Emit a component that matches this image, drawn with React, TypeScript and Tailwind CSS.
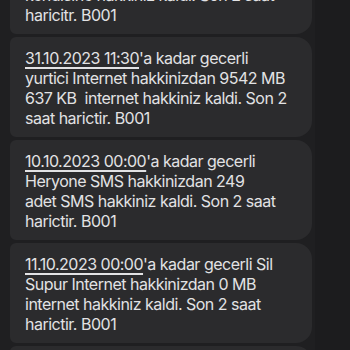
import * as React from "react";

type Msg = { date: string; lines: string[] };

const messages: Msg[] = [
  {
    date: "",
    lines: [
      "Sil Supur",
      "Internet hakkinizdan 0 MB",
      "kendisine hakkiniz kaldi. Son 2 saat",
      "haricitr. B001",
    ],
  },
  {
    date: "31.10.2023 11:30",
    lines: [
      "'a kadar gecerli",
      "yurtici Internet hakkinizdan 9542 MB",
      "637 KB \u00a0internet hakkiniz kaldi. Son 2",
      "saat harictir. B001",
    ],
  },
  {
    date: "10.10.2023 00:00",
    lines: [
      "'a kadar gecerli",
      "Heryone SMS hakkinizdan 249",
      "adet SMS hakkiniz kaldi. Son 2 saat",
      "harictir. B001",
    ],
  },
  {
    date: "11.10.2023 00:00",
    lines: [
      "'a kadar gecerli Sil",
      "Supur Internet hakkinizdan 0 MB",
      "internet hakkiniz kaldi. Son 2 saat",
      "harictir. B001",
    ],
  },
  { date: "", lines: ["", "", "", ""] },
];

function Bubble({ msg }: { msg: Msg }) {
  const [first, ...rest] = msg.lines;
  return (
    <div className="h-[100px] w-[302px] whitespace-nowrap rounded-l-[6px] rounded-r-[16px] bg-[#2b2b2d] pl-[15px] pt-[11px] text-[16px] leading-[20px] tracking-[-0.5px] text-[#e2e2e4]">
      <div>
        {msg.date && (
          <span className="underline decoration-[1.5px] underline-offset-[3px]">{msg.date}</span>
        )}
        {first}
      </div>
      {rest.map((l, i) => (
        <div key={i}>{l}</div>
      ))}
    </div>
  );
}

export default function App() {
  return (
    <div
      className="flex h-[350px] w-[350px] overflow-hidden bg-[#1c1c1e]"
      style={{ fontFamily: "Inter, 'Noto Sans', sans-serif" }}
    >
      <div className="w-[315px] bg-[#1f1f21] pl-[10px]">
        <div className="-mt-[66px] flex flex-col gap-[3px]">
          {messages.map((m, i) => (
            <Bubble key={i} msg={m} />
          ))}
        </div>
      </div>
    </div>
  );
}
